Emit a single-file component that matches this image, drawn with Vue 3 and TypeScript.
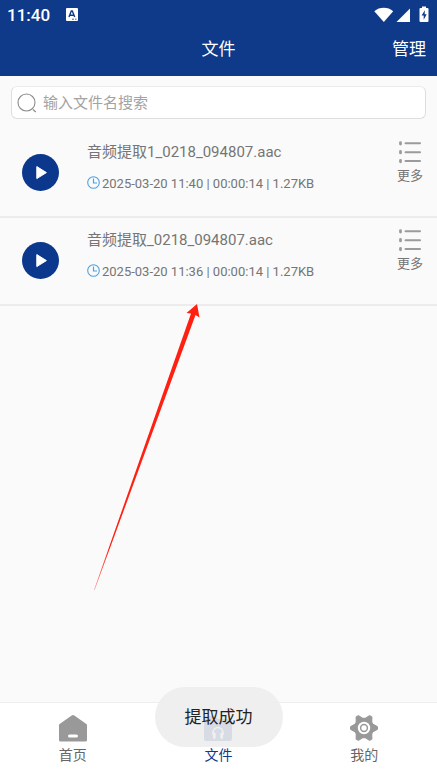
<script setup lang="ts">
import { ref } from 'vue'

interface AudioFile {
  id: number
  name: string
  date: string
  duration: string
  size: string
}

const files: AudioFile[] = [
  { id: 1, name: '音频提取1_0218_094807.aac', date: '2025-03-20 11:40', duration: '00:00:14', size: '1.27KB' },
  { id: 2, name: '音频提取_0218_094807.aac', date: '2025-03-20 11:36', duration: '00:00:14', size: '1.27KB' },
]

const keyword = ref('')
</script>

<template>
  <div class="screen">
    <header class="header">
      <div class="status">
        <span class="clock">11:40</span>
        <svg class="lang" width="12" height="13" viewBox="0 0 12 13" aria-hidden="true">
          <rect width="12" height="13" rx="1" fill="#fff" />
          <path d="M3 9 5.300 3h1L8.700 9M4 7.200h3.600" fill="none" stroke="#0f3989" stroke-width="1.400" />
          <path d="M6 11.200h2M9 11.200h1.500" stroke="#0f3989" stroke-width=".8" />
        </svg>
        <svg class="signals" width="56" height="18" viewBox="0 0 56 18" aria-hidden="true">
          <path d="M0.300 5.200C5.500 .7 14 .7 19.200 5.200L9.800 16Z" fill="#fff" />
          <path d="M36 2.500V16H22.500Z" fill="#fff" />
          <path d="M48 .5h4V2h1.500q1 0 1 1v12q0 1-1 1h-7q-1 0-1-1V3q0-1 1-1H48Z" fill="#fff" />
          <path d="M50.800 4.200 47.600 9.600h2.100v4.200l3-5.500h-2Z" fill="#0f3989" />
        </svg>
      </div>
      <div class="titlebar">
        <h1 class="title">文件</h1>
        <button class="manage" type="button">管理</button>
      </div>
    </header>

    <main class="content">
      <label class="search">
        <svg width="20" height="20" viewBox="0 0 20 20" fill="none" stroke="#8c8c8c" aria-hidden="true">
          <circle cx="9.500" cy="9.500" r="8.500" stroke-width="1.100" />
          <path d="m16 16.500 2.800 2.500" stroke-width="1.200" />
        </svg>
        <input v-model="keyword" type="text" placeholder="输入文件名搜索" aria-label="输入文件名搜索" />
      </label>

      <ul class="files">
        <li v-for="file in files" :key="file.id" class="file">
          <button class="play" type="button" aria-label="播放">
            <svg width="37" height="37" viewBox="0 0 37 37" aria-hidden="true">
              <circle cx="18.500" cy="18.500" r="18.500" fill="#0b378d" />
              <path d="M14.800 12.600v12l9.600-6Z" fill="#fff" stroke="#fff" stroke-width="1" stroke-linejoin="round" />
            </svg>
          </button>
          <div class="info">
            <div class="name">{{ file.name }}</div>
            <div class="meta">
              <svg width="13" height="16" viewBox="0 0 13 16" fill="none" stroke="#4ba3e6" aria-hidden="true">
                <circle cx="6.500" cy="6.500" r="5.800" stroke-width="1.100" />
                <path d="M6.500 2.500v4.500h3.500" stroke-width="1.200" />
              </svg>
              <span>{{ file.date }} | {{ file.duration }} | {{ file.size }}</span>
            </div>
          </div>
          <button class="more" type="button">
            <svg width="24" height="24" viewBox="0 0 24 24" stroke="#9b9b9b" stroke-linecap="round" aria-hidden="true">
              <path d="M7.500 3.300h14.500M7.500 12.200h14.500M7.500 21.100h14.500" stroke-width="2" />
              <path d="M2.500 2.600v1.400M2.500 11.500v1.400M2.500 20.400v1.400" stroke-width="2.800" />
            </svg>
            <span>更多</span>
          </button>
        </li>
      </ul>
    </main>

    <nav class="tabs">
      <a class="tab" href="#home">
        <svg width="28" height="28" viewBox="0 0 28 28" aria-hidden="true">
          <path d="M12.700 1.400q1.300-.9 2.600 0L27.400 10q.6.400.6 1.200V26q0 1.500-1.500 1.500h-25Q0 27.500 0 26V11.200Q0 10.400.6 10Z" fill="#999" />
          <rect x="9" y="20.500" width="10" height="3" rx="1.500" fill="#fff" />
        </svg>
        <span>首页</span>
      </a>
      <a class="tab active" href="#files">
        <svg width="28" height="28" viewBox="0 0 28 28" aria-hidden="true">
          <path d="M2 2h9l3 3h12q2 0 2 2v18q0 2-2 2H2q-2 0-2-2V4q0-2 2-2Z" fill="#0f3989" />
          <path d="M9 21v-2.500a5 5 0 0 1 10 0V21" fill="none" stroke="#fff" stroke-width="1.600" />
          <path d="M10.300 20v3.500M17.700 20v3.500" stroke="#fff" stroke-width="2.800" stroke-linecap="round" />
        </svg>
        <span>文件</span>
      </a>
      <a class="tab" href="#mine">
        <svg width="28" height="28" viewBox="0 0 28 28" aria-hidden="true">
          <g fill="#999" stroke="#999" stroke-width="1" stroke-linejoin="round">
            <circle cx="14" cy="14" r="9.800" />
            <path id="cog" d="M.6 12.600 5 10.200h18l4.400 2.400q.3 1.400 0 2.800L23 17.800H5L.6 15.400q-.3-1.400 0-2.800Z" />
            <use href="#cog" transform="rotate(60 14 14)" />
            <use href="#cog" transform="rotate(120 14 14)" />
          </g>
          <circle cx="14" cy="14" r="6.200" fill="#fff" />
          <circle cx="14" cy="14" r="3.400" fill="none" stroke="#999" stroke-width="1.500" />
        </svg>
        <span>我的</span>
      </a>
    </nav>

    <svg class="arrow" width="108" height="286" viewBox="0 0 108 286" aria-hidden="true">
      <defs>
        <linearGradient id="tail" x1="0" y1="1" x2="0" y2="0">
          <stop offset="0" stop-color="#ff2011" stop-opacity=".5" />
          <stop offset=".15" stop-color="#ff2011" />
        </linearGradient>
      </defs>
      <path d="M103 0 92.500 9 97 9.500 0 286H.6L101.500 11 105.500 13.500Z" fill="url(#tail)" />
    </svg>

    <div class="toast" role="status">提取成功</div>
  </div>
</template>

<style>
body {
  margin: 0;
}
</style>

<style scoped>
.screen {
  position: relative;
  display: flex;
  flex-direction: column;
  min-height: 100vh;
  background: #fafafa;
  color: #757575;
  font-family: Roboto, "Noto Sans CJK SC", sans-serif;
  font-size: 15px;
}

button {
  padding: 0;
  border: 0;
  background: none;
  color: inherit;
  font: inherit;
  cursor: pointer;
}

svg {
  display: block;
  flex: none;
}

.header {
  height: 76px;
  background: #0f3989;
  color: #fff;
}

.status {
  display: flex;
  align-items: center;
  gap: 16px;
  height: 30px;
  padding: 0 7px;
}

.clock {
  font-size: 17px;
  font-weight: 500;
}

.lang {
  margin-bottom: 2px;
}

.signals {
  margin-left: auto;
}

.titlebar {
  display: grid;
  grid-template-columns: 1fr auto 1fr;
  align-items: center;
  height: 34px;
  padding: 0 11px;
  font-size: 17px;
}

.title {
  grid-column: 2;
  margin: 0;
  font-size: 17px;
  font-weight: 400;
}

.manage {
  justify-self: end;
}

.content {
  flex: 1;
}

.search {
  display: flex;
  align-items: center;
  gap: 6px;
  box-sizing: border-box;
  height: 33px;
  margin: 10px 11px 11px;
  padding: 0 5px;
  border: 1px solid #dedede;
  border-top-color: #ebebeb;
  border-radius: 6px;
  background: #fff;
}

.search input {
  flex: 1;
  min-width: 0;
  padding: 0;
  border: 0;
  outline: 0;
  background: none;
  color: #757575;
  font: inherit;
}

.search input::placeholder {
  color: #a3a3a3;
  opacity: 1;
}

.files {
  margin: 0;
  padding: 0;
  list-style: none;
}

.file {
  display: flex;
  align-items: flex-start;
  box-sizing: border-box;
  height: 88px;
  padding: 10px 14px 0 22px;
  border-bottom: 2px solid #ececec;
}

.play {
  margin-top: 14px;
}

.info {
  flex: 1;
  min-width: 0;
  margin-left: 28px;
}

.name {
  line-height: 24px;
}

.meta {
  display: flex;
  align-items: center;
  gap: 2px;
  margin-top: 10px;
  font-size: 13px;
  line-height: 20px;
}

.more {
  display: flex;
  flex-direction: column;
  align-items: center;
  gap: 2px;
  font-size: 13px;
  line-height: 20px;
}

.tabs {
  display: grid;
  grid-template-columns: repeat(3, 1fr);
  box-sizing: border-box;
  height: 74px;
  padding-top: 11px;
  border-top: 1px solid #eee;
  background: #fff;
}

.tab {
  display: flex;
  flex-direction: column;
  align-items: center;
  gap: 2px;
  color: #666;
  font-size: 14px;
  line-height: 22px;
  text-decoration: none;
}

.tab.active {
  color: #0f3989;
}

.arrow {
  position: absolute;
  top: 304px;
  left: 94px;
  pointer-events: none;
}

.toast {
  position: absolute;
  bottom: 29px;
  left: 50%;
  padding: 0 30px;
  border-radius: 30px;
  background: rgb(237 237 237 / 0.9);
  color: #222;
  font-size: 17px;
  line-height: 60px;
  white-space: nowrap;
  transform: translateX(-50%);
}
</style>
